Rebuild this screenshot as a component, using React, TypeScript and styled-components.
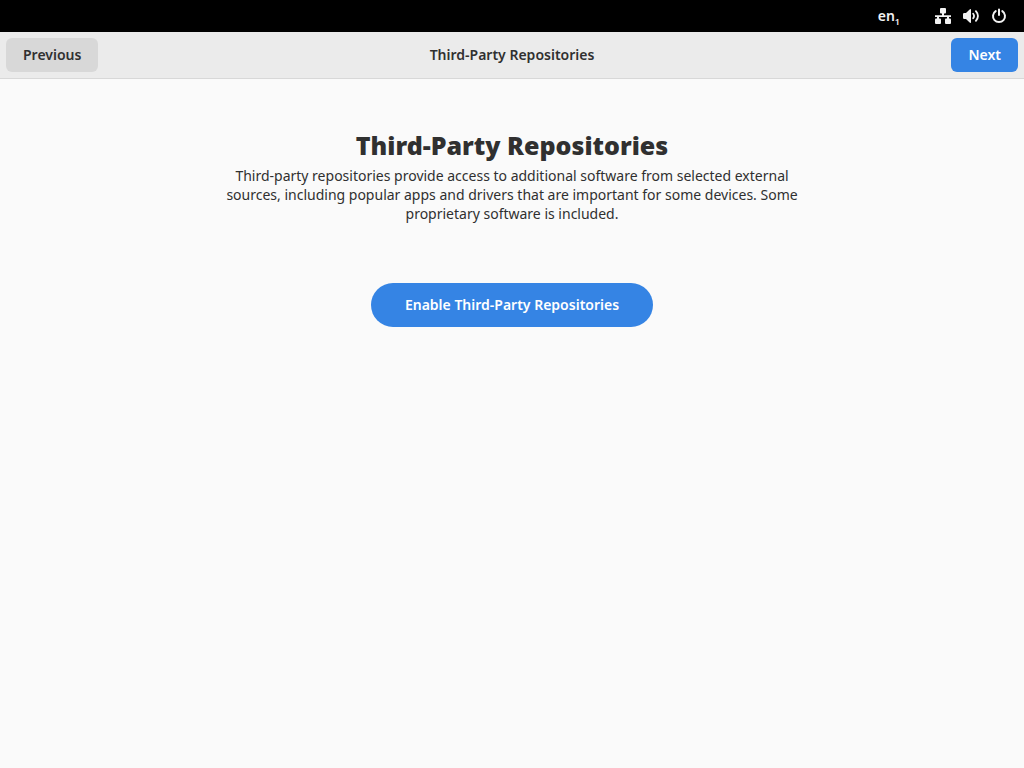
import React from "react";
import styled, { createGlobalStyle } from "styled-components";

const GlobalStyle = createGlobalStyle`
  * { box-sizing: border-box; }
  body {
    margin: 0;
    background: #fafafa;
    color: #303030;
    font: 14px/19px "Noto Sans", "Open Sans", sans-serif;
  }
  button { font: inherit; border: 0; cursor: pointer; }
`;

const Page = styled.div`
  min-height: 100vh;
  display: flex;
  flex-direction: column;
`;

const TopBar = styled.header`
  height: 32px;
  padding: 0 17px;
  display: flex;
  align-items: center;
  justify-content: flex-end;
  gap: 35px;
  background: #000;
  color: #f2f2f2;
`;

const PanelButton = styled.button`
  display: flex;
  align-items: center;
  gap: 12px;
  padding: 0;
  background: none;
  color: inherit;
  font-weight: 600;
`;

const LayoutName = styled.span`
  display: flex;
  align-items: flex-end;
  padding-bottom: 2px;
`;

const LayoutIndex = styled.sub`
  font-size: 9px;
  line-height: 7px;
`;

const HeaderBar = styled.nav`
  height: 47px;
  padding: 0 6px;
  display: grid;
  grid-template-columns: 1fr auto 1fr;
  align-items: center;
  background: #ebebeb;
  border-bottom: 1px solid #d8d8d8;
`;

const HeaderTitle = styled.span`
  padding-bottom: 2px;
  font-weight: 600;
`;

const NavButton = styled.button<{ $primary?: boolean }>`
  height: 34px;
  padding: 0 17px 2px;
  border-radius: 6px;
  font-weight: 600;
  justify-self: ${(p) => (p.$primary ? "end" : "start")};
  background: ${(p) => (p.$primary ? "#3584e4" : "#d8d8d8")};
  color: ${(p) => (p.$primary ? "#fff" : "#303030")};
`;

const Content = styled.main`
  padding: 47px 24px;
  display: flex;
  flex-direction: column;
  align-items: center;
  text-align: center;
`;

const Title = styled.h1`
  margin: 0;
  font-size: 25px;
  line-height: 38px;
  font-weight: 900;
`;

const Description = styled.p`
  max-width: 576px;
  margin: 2px 0 60px;
`;

const EnableButton = styled.button`
  height: 44px;
  padding: 0 34px 2px;
  border-radius: 22px;
  background: #3584e4;
  color: #fff;
  font-weight: 600;
`;

const NetworkIcon = () => (
  <svg width="16" height="16" viewBox="0 0 16 16" fill="currentColor" aria-hidden="true">
    <rect x="5" y="0" width="6" height="5.4" rx="1" />
    <rect x="0" y="10.6" width="6" height="5.4" rx="1" />
    <rect x="10" y="10.6" width="6" height="5.4" rx="1" />
    <path d="M7 5h2v2.2h7V9h-2v2h-2V9H4v2H2V9H0V7.2h7z" />
  </svg>
);

const VolumeIcon = () => (
  <svg width="16" height="16" viewBox="0 0 16 16" fill="none" stroke="currentColor" strokeWidth="1.8" strokeLinecap="round" aria-hidden="true">
    <path d="M0 6.2Q0 5 1.2 5H3l3.6-3.6Q7 1 8 1v14q-1 0-1.4-.4L3 11H1.2Q0 11 0 9.8z" fill="currentColor" stroke="none" />
    <path d="M10.2 5.8q1.7 2.2 0 4.4M12.9 3.2q4.1 4.8 0 9.6" />
  </svg>
);

const PowerIcon = () => (
  <svg width="16" height="16" viewBox="0 0 16 16" fill="none" stroke="currentColor" strokeWidth="2" strokeLinecap="round" aria-hidden="true">
    <path d="M8 1.5V7M4.7 3.1a6 6 0 1 0 6.6 0" />
  </svg>
);

export default function App() {
  return (
    <Page>
      <GlobalStyle />
      <TopBar>
        <PanelButton aria-label="Keyboard layout">
          <LayoutName>
            en<LayoutIndex>1</LayoutIndex>
          </LayoutName>
        </PanelButton>
        <PanelButton aria-label="System menu">
          <NetworkIcon />
          <VolumeIcon />
          <PowerIcon />
        </PanelButton>
      </TopBar>
      <HeaderBar>
        <NavButton>Previous</NavButton>
        <HeaderTitle>Third-Party Repositories</HeaderTitle>
        <NavButton $primary>Next</NavButton>
      </HeaderBar>
      <Content>
        <Title>Third-Party Repositories</Title>
        <Description>
          Third-party repositories provide access to additional software from selected external
          sources, including popular apps and drivers that are important for some devices. Some
          proprietary software is included.
        </Description>
        <EnableButton>Enable Third-Party Repositories</EnableButton>
      </Content>
    </Page>
  );
}
